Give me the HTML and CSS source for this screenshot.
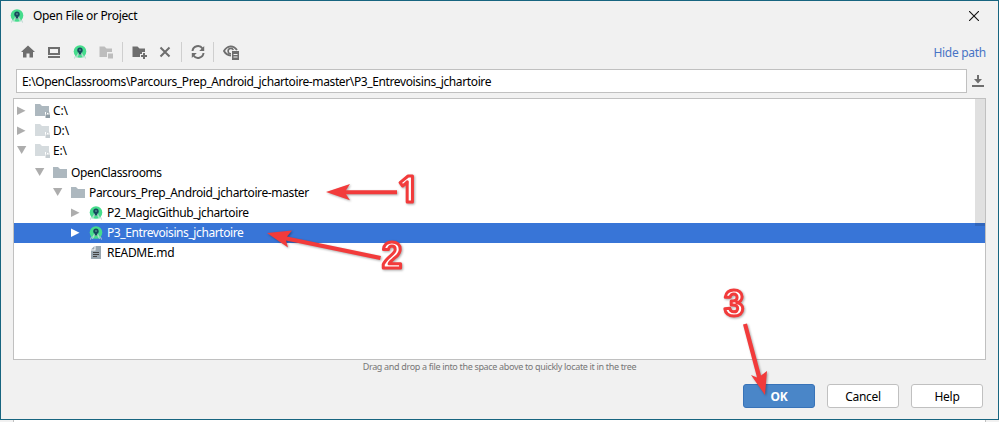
FILE: index.html
```html
<!DOCTYPE html>
<html lang="en">
<head>
<meta charset="utf-8">
<title>Open File or Project</title>
<link rel="stylesheet" href="styles.css">
</head>
<body>
<svg class="defs" aria-hidden="true">
  <symbol id="studio" viewBox="0 0 14 14">
    <path d="M3 9.500L1.500 13.500M11 9.500l1.500 4" stroke="#b5d3cc" stroke-width="1"/>
    <circle cx="7" cy="6.500" r="6.300" fill="#45dc8c"/>
    <path d="M5.800 7.500L3.500 12.800M8.200 7.500l2.300 5.300" stroke="#b5ebd3" stroke-width="1.100"/>
    <path d="M3.500 10.500q3.500-2.400 7 0" stroke="#a6dcc4" fill="none"/>
    <circle cx="7" cy="5.200" r="2.700" fill="#174a5c"/>
    <path d="M7 6v3.500" stroke="#174a5c" stroke-width="2.500"/>
    <circle cx="7" cy="5" r=".8" fill="#77b5a8"/>
  </symbol>
  <symbol id="folder" viewBox="0 0 16 14"><path d="M0 1h5l2 2h7v9H0z" fill="#adb8bf"/></symbol>
  <symbol id="drive" viewBox="0 0 16 14"><path d="M0 0h5l2 2h7v6h-4v4H0z" fill="#adb8bf"/><path d="M10.500 10.500h4.500V14h-4.500z" fill="#8f9ca4"/><path d="M11.500 10.500V8.300h2.500v2.200" fill="none" stroke="#8f9ca4" stroke-width=".9"/></symbol>
  <symbol id="right" viewBox="0 0 10 10"><path d="M0 .500l8.500 4.200L0 9z" fill="currentColor"/></symbol>
  <symbol id="down" viewBox="0 0 10 10"><path d="M0 0h9.300L4.700 8z" fill="currentColor"/></symbol>
</svg>
<main class="dialog">
  <header class="title">
    <svg class="logo"><use href="#studio"/></svg>
    <span class="caption">Open File or Project</span>
    <svg class="close" viewBox="0 0 10 10"><path d="M0 0l10 10M10 0L0 10" stroke="#111" stroke-width="1.1"/></svg>
  </header>
  <nav class="toolbar">
    <svg class="tool" viewBox="0 0 16 16"><path d="M8 1.500l7 6.500h-2v5.500H9.500V9.500h-3v4H3V8H1z" fill="#6e6e6e"/></svg>
    <svg class="tool" viewBox="0 0 16 16"><path d="M3 4h10v6H3zM2 13h12" fill="none" stroke="#6e6e6e" stroke-width="2"/></svg>
    <svg class="tool studio"><use href="#studio"/></svg>
    <svg class="tool" viewBox="0 0 16 16"><path d="M1.500 2.500h5l2 2H14V8H9v5H1.500zM10 9.500h5v5h-5z" fill="#bdbdbd"/></svg>
    <i class="sep"></i>
    <svg class="tool" viewBox="0 0 16 16"><path d="M1.500 2.500h5l2 2H14V8h-3v2H9v3H1.500zM12 9h2v2h2v2h-2v2h-2v-2h-2v-2h2z" fill="#6e6e6e"/></svg>
    <svg class="tool" viewBox="0 0 16 16"><path d="M3.500 3.500l9 9m0-9l-9 9" stroke="#6e6e6e" stroke-width="2"/></svg>
    <i class="sep"></i>
    <svg class="tool refresh" viewBox="0 0 16 16"><path d="M2.500 7a5.500 5.500 0 0 1 10-2.500M13.500 9a5.500 5.500 0 0 1-10 2.500" fill="none" stroke="#6e6e6e" stroke-width="2"/><path d="M14.200 2v5h-5zM1.800 14V9h5z" fill="#6e6e6e"/></svg>
    <i class="sep"></i>
    <svg class="tool eye" viewBox="0 0 16 16"><path d="M14 6Q11 2 7.500 2.300 3 3 1 7 3 11 8 11.700" fill="none" stroke="#6e6e6e" stroke-width="1.800"/><path d="M10.300 6a2.700 2.700 0 1 0-2.300 3.800" fill="none" stroke="#6e6e6e" stroke-width="1.600"/><path d="M9 7h7v9H9z" fill="#6e6e6e"/><path d="M10.500 10.500h4M10.500 13h4" stroke="#f2f2f2"/></svg>
    <a class="hide">Hide path</a>
  </nav>
  <section class="path">
    <div class="field"><span class="path-text">E:\OpenClassrooms\Parcours_Prep_Android_jchartoire-master\P3_Entrevoisins_jchartoire</span></div>
    <svg class="download" viewBox="0 0 12 12"><path d="M5 0h2v4h3L6 8.500 2 4h3zM0 10h12v2H0z" fill="#6e6e6e"/></svg>
  </section>
  <section class="tree">
    <div class="rows">
      <div class="row l0"><svg class="arrow"><use href="#right"/></svg><svg class="icon"><use href="#drive"/></svg><span class="drive">C:\</span></div>
      <div class="row l0 pale"><svg class="arrow"><use href="#right"/></svg><svg class="icon"><use href="#drive"/></svg><span class="drive">D:\</span></div>
      <div class="row l0 pale last-drive"><svg class="arrow"><use href="#down"/></svg><svg class="icon"><use href="#drive"/></svg><span class="drive">E:\</span></div>
      <div class="row l1"><svg class="arrow"><use href="#down"/></svg><svg class="icon"><use href="#folder"/></svg><span class="t-open">OpenClassrooms</span></div>
      <div class="row l2"><svg class="arrow"><use href="#down"/></svg><svg class="icon"><use href="#folder"/></svg><span class="t-master">Parcours_Prep_Android_jchartoire-master</span></div>
      <div class="row l3"><svg class="arrow"><use href="#right"/></svg><svg class="icon project"><use href="#studio"/></svg><span class="t-p2">P2_MagicGithub_jchartoire</span></div>
      <div class="row l3 selected"><svg class="arrow"><use href="#right"/></svg><svg class="icon project"><use href="#studio"/></svg><span class="t-p3">P3_Entrevoisins_jchartoire</span></div>
      <div class="row l3"><svg class="arrow"></svg><svg class="icon" viewBox="0 0 16 14"><path d="M6.500 0H12v13H2V4.500h4.500z" fill="#9aa7b0"/><path d="M5.500 0v3.500H2z" fill="#9aa7b0"/><path d="M4 6.500h6M4 8.500h6M4 10.500h4" stroke="#444"/></svg><span class="t-readme">README.md</span></div>
    </div>
    <i class="scroll"></i>
  </section>
  <p class="hint"><span>Drag and drop a file into the space above to quickly locate it in the tree</span></p>
  <footer class="buttons">
    <button class="ok">OK</button><button>Cancel</button><button>Help</button>
  </footer>
</main>
<div class="behind"><i></i></div>
<svg class="notes" viewBox="0 0 999 422">
  <g class="pointer">
    <path d="M326 192l24-8-4 6.200h51v4h-51l4 6z"/>
    <path d="M267 233l25-2.500-5 6 94 19.500-1 4-94-19.500 2 7z"/>
    <path d="M765 395l-14-20 6 2.500-14-53 4-1 14 52 6-4.500z"/>
  </g>
  <g class="numbers"><text class="one" x="398" y="202">1</text><text x="382" y="268">2</text><text x="724" y="316">3</text></g>
</svg>
</body>
</html>
```
FILE: styles.css
```css
* { box-sizing: border-box; }
body { margin: 0; width: 999px; height: 422px; overflow: hidden; background: #f1f1f1; font: 12px/20px "Noto Sans", sans-serif; letter-spacing: -.38px; color: #000; }
.defs { display: none; }
svg { display: block; flex: none; }
.dialog { display: flex; flex-direction: column; height: 420px; border: 1px solid #176580; background: #f1f1f1; }
.title { display: flex; align-items: center; height: 30px; padding: 0 19px 0 9px; }
.logo { width: 14px; height: 14px; margin-right: 9px; }
.caption { letter-spacing: -.33px; }
.close { width: 10px; height: 10px; margin-left: auto; }
.toolbar { display: flex; align-items: center; height: 38px; padding: 4px 12px 0 19px; gap: 10px; }
.tool { width: 16px; height: 16px; overflow: visible; }
.tool.studio { width: 14px; height: 14px; margin: 0 1px; }
.sep { width: 1px; height: 20px; margin: 0 -3px 0 -2px; background: #cfcfcf; }
.sep + .tool { margin-left: 1px; }
.refresh + .sep { margin-left: -3px; }
.sep + .eye { margin-left: 2px; }
.hide { margin: 1px 0 0 auto; letter-spacing: -.28px; color: #4874c5; }
.path { display: flex; align-items: center; padding-left: 15px; height: 24px; }
.field { width: 951px; height: 24px; border: 1px solid #c0c0c0; background: #fff; padding: 2px 5px 0; white-space: nowrap; }
.download { width: 12px; height: 12px; margin-left: 5px; }
.tree { display: flex; margin: 5px 12px 0; height: 262px; border: 1px solid #c0c0c0; background: #fff; }
.rows { flex: 1; padding-top: 1px; }
.scroll { position: relative; width: 10px; height: 127px; margin-left: -10px; background: #0000001f; }
.row { display: flex; align-items: center; height: 20px; white-space: nowrap; }
.row:first-child { margin-top: 1px; }
.l0 { padding-left: 3px; }
.l1 { padding-left: 21px; }
.l2 { padding-left: 39px; }
.l3 { padding-left: 57px; }
.last-drive { margin-bottom: 2px; }
.arrow { width: 10px; height: 10px; margin-right: 8px; color: #adadad; }
.icon { width: 16px; height: 14px; margin-right: 2px; }
.drive { letter-spacing: -.15px; }
.t-readme { letter-spacing: -.3px; }
.t-p3 { letter-spacing: -.41px; }
.pale .icon { opacity: .5; }
.project { width: 14px; margin-right: 4px; }
.selected { background: #3875d7; color: #fff; }
.selected .arrow { color: #fff; }
.hint { margin: 0; height: 18px; text-align: center; font-size: 9px; line-height: 14px; letter-spacing: -.33px; color: #777; }
.buttons { display: flex; justify-content: flex-end; gap: 12px; padding: 6px 15px 0 0; }
button { width: 72px; height: 24px; padding: 1px 0 0; border: 1px solid #c0c0c0; border-radius: 3px; background: #fff; font: 12px/20px "Noto Sans", sans-serif; letter-spacing: -.3px; color: #000; }
.ok { border-color: #3873b8; background: #4a86c8; color: #fff; font-weight: 700; }
.behind { height: 2px; padding: 0 13px; }
.behind i { display: block; height: 2px; background: #fff; border: solid #c0c0c0; border-width: 0 1px; }
.notes { position: absolute; left: 0; top: 0; width: 999px; height: 422px; pointer-events: none; }
.pointer { fill: #f23b3b; filter: drop-shadow(1px 1px 1px #0005); }
.numbers { font: 700 36px "Liberation Sans", sans-serif; letter-spacing: 0; fill: #fff; stroke: #f23b3b; stroke-width: 3px; stroke-linejoin: round; filter: drop-shadow(1px 1px 1px #0005); }
.one { font-family: "Open Sans", sans-serif; font-size: 35px; }
```
